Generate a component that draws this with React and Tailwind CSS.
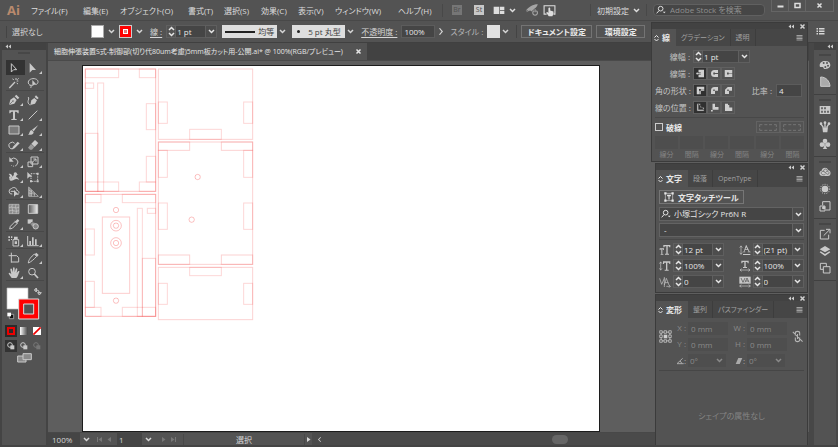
import React, { useState } from 'react';

const menus = [
    { label: 'ファイル(F)', width: 'w-[52px]' },
    { label: '編集(E)', width: 'w-[37px]' },
    { label: 'オブジェクト(O)', width: 'w-[68px]' },
    { label: '書式(T)', width: 'w-[36px]' },
    { label: '選択(S)', width: 'w-[37px]' },
    { label: '効果(C)', width: 'w-[37px]' },
    { label: '表示(V)', width: 'w-[37px]' },
    { label: 'ウィンドウ(W)', width: 'w-[63px]' },
    { label: 'ヘルプ(H)', width: 'w-[44px]' },
];

const Icon = ({ size = 'size-3', box = 36, className = '', children }) => (
    <svg className={`${size} ${className} shrink-0`} viewBox={`0 0 ${box} ${box}`} fill="currentColor" stroke="none" aria-hidden="true">
        {children}
    </svg>
);

const line = { fill: 'none', stroke: 'currentColor', strokeWidth: 3 };
const thin = { fill: 'none', stroke: 'currentColor', strokeWidth: 2 };

/* Herramientas, agrupadas como en la barra lateral */
const toolGroups = [
    [
        { name: '選択', more: false, art: <path d="M10 5v25l7-7h9z" {...line} /> },
        { name: 'ダイレクト選択', more: true, art: <path d="M8 3v29l8-8h11z" /> },
        { name: '自動選択', more: false, art: <g {...line}><path d="M4 33 21 15" strokeWidth="4" /><path d="M24 3v6M31 12h-5M14 5l3 4M30 21l-4-3M32 4l-4 4" /></g> },
        { name: 'なげなわ', more: false, art: <g><path d="M16 25C2 26 0 12 10 7s23-1 23 7c0 4-2 7-5 8M8 25c5 0 6 6 2 8" {...line} /><path d="M16 9v19l5-5h8z" /></g> },
    ],
    [
        { name: 'ペン', more: true, art: <g><path d="M3 33 7 17l11-7 8 8-7 11z" /><path d="m20 7 5-5 9 9-5 5z" /><path d="m4 32 10-10" stroke="#535353" strokeWidth="2" /><circle cx="15" cy="21" r="2" fill="#535353" /></g> },
        { name: '曲線', more: false, art: <g><path d="M10 33l3-14 9-7 8 7-6 10z" /><path d="m23 9 4-5 8 8-4 4z" /><path d="M3 9c5 3 0 9 0 14s3 9 7 10" {...line} /></g> },
        { name: '文字', more: true, art: <path d="M4 4h28v9h-3c-1-4-3-5-8-5v19c0 3 1 3 5 3v3H10v-3c4 0 5 0 5-3V8c-5 0-7 1-8 5H4z" /> },
        { name: '直線', more: true, art: <path d="M5 31 31 5" {...line} /> },
        { name: '長方形', more: true, art: <path d="M3 6h30v24H3z" {...line} fill="#7b7b7b" /> },
        { name: 'ブラシ', more: true, art: <g><path d="M34 3 20 22l-5-5z" /><path d="M13 18l7 6c-1 9-9 9-17 8 6-3 3-11 10-14z" /></g> },
        { name: 'Shaper', more: true, art: <g><path d="M16 29A10 10 0 1 1 20 13" {...line} /><path d="M12 31l3-8L29 8l6 5-15 15z" /></g> },
        { name: '消しゴム', more: true, art: <g><path d="M13 14 24 3l10 9-11 12z" /><path d="m12 15 10 9-7 8H9l-6-6z" fill="#9a9a9a" /></g> },
    ],
    [
        { name: '回転', more: true, art: <g><path d="M9 10a12 12 0 1 1 1 18" {...line} strokeDasharray="42 3 3 3 3 3" /><path d="M4 3v14h13z" /></g> },
        { name: '拡大・縮小', more: true, art: <g {...line}><path d="M12 3h21v21H12zM3 18h14v14H3z" /><path d="m17 18 9-9M19 9h8v8" /></g> },
        { name: '線幅', more: true, art: <g><path d="M2 9c6-3 9 1 12 8 4-8 9-11 18-7-6 0-7 4-8 8 3 1 7 3 10 9-7-4-12-3-17 0-6 4-12 3-14-3 4 2 8-1 9-5C7 19 6 13 2 9z" /><circle cx="22" cy="9" r="5" /><circle cx="7" cy="20" r="4" /></g> },
        { name: '自由変形', more: false, art: <g><path d="M12 8h20v23H12z" {...line} strokeDasharray="4 3" /><path d="M1 3v20l6-6h9zM29 5h6v6h-6zM29 28h6v6h-6zM9 28h6v6H9z" /></g> },
        { name: 'シェイプ形成', more: true, art: <g><path d="M13 24a8 8 0 0 1-3-16c7-7 17-2 16 5 6 1 8 5 6 10M8 16h12" {...line} /><path d="M18 12v20l6-6h9z" /></g> },
        { name: '遠近グリッド', more: true, art: <g><path d="M5 3v28h29L5 3zm0 9 17 10M5 21l20 4M14 12v19M22 20v11" {...thin} /><path d="M5 4v27h9V13z" fillOpacity="0.5" /></g> },
    ],
    [
        { name: 'メッシュ', more: false, art: <g><path d="M3 4h30v28H3z" fill="#8b8b8b" /><path d="M3 4h30v28H3zM3 14c10-6 18 5 30-1M3 24c10-6 18 5 30-1M13 4c-5 9 5 18 0 28M24 4c-5 9 5 18 0 28" {...thin} /></g> },
        { name: 'グラデーション', more: false, art: <g><defs><linearGradient id="tool-grad"><stop stopColor="#555" /><stop offset="1" stopColor="#eee" /></linearGradient></defs><path d="M4 5h28v26H4z" fill="url(#tool-grad)" stroke="currentColor" strokeWidth="3" /></g> },
        { name: 'スポイト', more: true, art: <g><path d="M5 33 7 25 21 11l6 6-14 14z" {...line} /><path d="m19 8 4 1 6-6 5 5-6 6 1 5z" /></g> },
        { name: 'ブレンド', more: false, art: <g><path d="M2 4h15v13H2z" /><circle cx="18" cy="19" r="7" fill="#999" stroke="#535353" strokeWidth="2" /><circle cx="26" cy="25" r="8" fill="#888" stroke="currentColor" strokeWidth="3" /></g> },
    ],
    [
        { name: 'シンボルスプレー', more: true, art: <g><path d="M15 14h17v19H15z" {...line} /><path d="M18 5h11v8H18zM20 19h7v8h-7zM1 4h5v5H1zM9 4h4v5H9zM1 13h5v4H1zM9 12h3v3H9z" /></g> },
        { name: 'グラフ', more: true, art: <g><path d="M2 3v29h33" {...line} /><path d="M7 18h5v12H7zM15 7h5v23h-5zM24 13h5v17h-5z" /></g> },
    ],
    [
        { name: 'アートボード', more: false, art: <path d="M10 2v30M2 11h24M10 30h22V17l-6-6" {...line} /> },
        { name: 'スライス', more: true, art: <g><path d="M4 33c0-10 9-19 18-27l7 7C21 22 13 29 4 33z" {...line} /><path d="m23 7 5-5 7 7-5 5z" /></g> },
        { name: '手のひら', more: true, art: <path d="M11 33 2 20c0-3 3-4 5-1l3 3L7 8c0-4 4-4 5-1l3 9V4c0-4 5-4 5 0v12l3-10c1-3 5-3 5 1l-2 11 4-5c3-2 5 0 4 2-3 6-4 14-9 18z" /> },
        { name: 'ズーム', more: false, art: <g><circle cx="15" cy="14" r="10" {...line} /><path d="m22 21 11 12" {...line} strokeWidth="5" /></g> },
    ],
];

/* Piezas del dibujo: [x, y, ancho, alto, opacidad] */
const plates = [
    [16, 27, 211, 367, 0.24], [16, 27, 100, 26, 0.16], [178, 27, 49, 26, 0.16], [16, 69, 25, 16, 0.16],
    [53, 69, 18, 325, 0.16], [199, 131, 28, 78, 0.16], [199, 289, 28, 77, 0.16], [16, 220, 38, 174, 0.16],
    [16, 366, 100, 28, 0.16], [178, 366, 49, 28, 0.16],
    [235, 27, 283, 211, 0.18], [235, 126, 27, 64, 0.16], [491, 126, 27, 64, 0.16], [329, 208, 95, 30, 0.16],
    [235, 246, 283, 367, 0.18], [235, 246, 94, 25, 0.18], [424, 246, 94, 25, 0.18], [235, 271, 27, 81, 0.16],
    [491, 271, 27, 81, 0.16], [235, 429, 27, 79, 0.16], [491, 429, 27, 79, 0.16], [235, 585, 94, 28, 0.18],
    [424, 585, 94, 28, 0.18],
    [235, 622, 283, 157, 0.18], [329, 622, 95, 25, 0.16], [235, 670, 27, 63, 0.16], [491, 670, 27, 63, 0.16],
    [16, 403, 211, 366, 0.22], [16, 403, 47, 25, 0.16], [127, 403, 100, 25, 0.16], [67, 471, 82, 229, 0.2],
    [172, 445, 15, 324, 0.16], [202, 445, 25, 15, 0.16], [16, 507, 27, 78, 0.16], [16, 664, 27, 78, 0.16],
    [187, 595, 40, 174, 0.18], [16, 742, 47, 27, 0.16], [127, 742, 100, 27, 0.16],
];

const holes = [
    [353, 351, 8], [335, 479, 8], [108, 450, 8], [108, 497, 16], [108, 497, 8],
    [108, 549, 16], [108, 549, 8], [108, 722, 8],
];

const dockGroups = [
    [
        { name: 'カラー', art: <g><path d="M18 6c11 0 16 5 16 12 0 8-8 12-18 12-3 0-1-5-5-6-4 0-9 1-9-4C2 11 9 6 18 6z" /><g fill="#535353"><circle cx="14" cy="12" r="3" /><circle cx="24" cy="12" r="3" /><circle cx="27" cy="20" r="3" /><circle cx="19" cy="24" r="3" /></g></g> },
        { name: 'カラーガイド', art: <path d="M5 3c16 0 27 12 28 28H5z" fill="#aaa" stroke="currentColor" strokeWidth="3" /> },
    ],
    [
        { name: 'スウォッチ', art: <g><path d="M2 6h32v24H2z" /><path d="M6 10h6v6H6zM15 10h6v6h-6zM6 20h6v6H6zM15 20h6v6h-6zM24 20h6v6h-6z" fill="#6b6b6b" /></g> },
        { name: 'ブラシ', art: <g><path d="M10 19h17l-2 15H12z" /><path d="M13 19 5 8M18 19V4M23 19l7-11" {...line} strokeWidth="4" /><circle cx="6" cy="8" r="4" /><circle cx="18" cy="5" r="4" /><circle cx="30" cy="8" r="4" /></g> },
        { name: 'シンボル', art: <g><circle cx="18" cy="9" r="7" /><circle cx="9" cy="20" r="7" /><circle cx="27" cy="20" r="7" /><path d="M16 15h4c0 9 1 15 5 18H11c4-3 5-9 5-18z" /></g> },
    ],
    [
        { name: 'CC ライブラリ', art: <g><path d="M11 30C-1 30-2 16 8 14c1-10 16-13 20-1 9 1 9 17-1 17z" /><path d="M19 25c-5 4-14 0-12-6 2-5 8-4 11 0l5 5c6 3 10-4 5-7-3-2-7 0-9 3M14 16c-1-9 11-9 11-1" fill="none" stroke="#535353" strokeWidth="2" /></g> },
        { name: 'アピアランス', art: <g><circle cx="18" cy="18" r="10" /><circle cx="18" cy="18" r="14" {...line} strokeDasharray="3 4" /></g> },
        { name: 'アセット', art: <g><path d="M11 16V5h22v25H20" {...line} /><path d="M3 18h15v15H3z" {...line} /><circle cx="14" cy="23" r="5" /></g> },
    ],
    [
        { name: '書き出し', art: <g><path d="M17 7H4v26h25V20" {...line} /><path d="M14 23 31 6M21 4h12v12" {...line} /></g> },
        { name: 'レイヤー', art: <g><path d="m18 3 16 10-16 9L2 13z" /><path d="m5 19 13 8 13-8 3 3-16 11L2 22z" /></g> },
        { name: 'アートボード', art: <g {...line}><path d="M4 4h18v18H4z" /><path d="M13 14h20v19H13z" fill="#535353" /></g> },
    ],
];

const Chevron = ({ className = '' }) => (
    <Icon size="size-[7px]" box={14} className={className}>
        <path d="m2 4 5 5 5-5" fill="none" stroke="currentColor" strokeWidth="3" />
    </Icon>
);

const Collapse = () => (
    <Icon size="size-[7px]" box={14}>
        <path d="M6 3 1 7l5 4zM12 3 7 7l5 4z" />
    </Icon>
);

const Cross = () => (
    <Icon size="size-[7px]" box={14}>
        <path d="m3 3 8 8M11 3l-8 8" fill="none" stroke="currentColor" strokeWidth="3" />
    </Icon>
);

const Glass = () => (
    <Icon size="size-[10px]" box={30}>
        <circle cx="14" cy="11" r="7" {...line} />
        <path d="m9 17-7 8" {...line} />
        <path d="M20 20h9l-4 5z" />
    </Icon>
);

const Stepper = ({ label }) => (
    <button type="button" aria-label={`${label}を増減`} className="flex w-[10px] shrink-0 items-center justify-center border border-[#606060]">
        <svg className="h-[11px] w-[7px]" viewBox="0 0 14 22" fill="none" stroke="currentColor" strokeWidth="3" aria-hidden="true">
            <path d="m2 8 5-5 5 5M2 14l5 5 5-5" />
        </svg>
    </button>
);

/* Campo numérico con flechas y lista */
const NumberField = ({ id, label, value, width = 'w-[29px]' }) => (
    <span className="flex h-[13px] text-[#e6e6e6]">
        <Stepper label={label} />
        <input id={id} aria-label={label} defaultValue={value} className={`${width} border-y border-[#5c5c5c] bg-[#454545] pl-px leading-3 outline-none`} />
        <button type="button" aria-label={`${label}の候補`} className="flex w-[12px] items-center justify-center border border-[#5f5f5f] bg-[#4d4d4d]">
            <Chevron />
        </button>
    </span>
);

const Drop = ({ label, value, className = '', pad = 'pl-1' }) => (
    <span className={`grid h-[13px] ${className}`}>
        <select aria-label={label} className={`[grid-area:1/1] w-full appearance-none border border-[#636363] bg-[#454545] leading-3 outline-none ${pad}`}>
            <option>{value}</option>
        </select>
        <span className="pointer-events-none flex w-[12px] items-center justify-center justify-self-end border border-[#636363] bg-[#4d4d4d] [grid-area:1/1]">
            <Chevron />
        </span>
    </span>
);

const Panel = ({ tabs, className = '', children }) => (
    <section className={`flex flex-col border border-[#3b3b3b] bg-[#535353] ${className}`}>
        <div className="flex h-[6px] items-center justify-end gap-1 bg-[#424242] pr-px">
            <button type="button" aria-label="たたむ"><Collapse /></button>
            <button type="button" aria-label="閉じる"><Cross /></button>
        </div>
        <div role="tablist" className="flex h-[17px] items-stretch bg-[#464646] text-[7px] text-[#a0a0a0]">
            {tabs.map((tab, i) => (
                <button
                    key={tab}
                    type="button"
                    role="tab"
                    aria-selected={i === 0}
                    className={i === 0
                        ? 'flex items-center gap-[3px] bg-[#535353] pr-1.5 pl-0.5 text-[8px] font-bold text-[#e8e8e8]'
                        : 'border-r border-[#3d3d3d] px-[5px]'}
                >
                    {i === 0 && (
                        <svg className="h-2 w-[5px]" viewBox="0 0 10 16" fill="none" stroke="currentColor" strokeWidth="2" aria-hidden="true">
                            <path d="m1 7 4-4 4 4M1 10l4 4 4-4" />
                        </svg>
                    )}
                    {tab}
                </button>
            ))}
            <button type="button" aria-label="パネルメニュー" className="mr-1 ml-auto">
                <Icon size="size-[7px]" box={14}><path d="M1 2h12v2H1zM1 5h12v2H1zM1 8h12v2H1zM1 11h12v2H1z" /></Icon>
            </button>
        </div>
        {children}
    </section>
);

const strokeRows = [
    {
        label: '線端',
        options: [
            { name: 'なし', art: <g><path d="M10 3h22v30H10V22h9v-8h-9z" /><path d="M3 18h18" {...line} /><circle cx="5" cy="18" r="4" /></g> },
            { name: '丸形', art: <path fillRule="evenodd" d="M32 4H18a14 14 0 0 0 0 28h14V20H20v2h-7v-8h7v2h12z" /> },
            { name: '突出', art: <path fillRule="evenodd" d="M3 4h30v28H3zm9 10v8h7v-3h14v-2H19v-3z" /> },
        ],
    },
    {
        label: '角の形状',
        options: [
            { name: 'マイター', art: <path fillRule="evenodd" d="M3 3h30v17H20v13H3zm9 9v7h3v14h2V19h2v-2h14v-2H19v-3z" /> },
            { name: 'ラウンド', art: <path fillRule="evenodd" d="M4 32V18C4 9 9 4 18 4h14v15H20v13zm9-18v6h6v-6z" /> },
            { name: 'ベベル', art: <path fillRule="evenodd" d="M4 32V15L15 4h17v15H20v13zm9-18v6h6v-6z" /> },
        ],
    },
    {
        label: '線の位置',
        options: [
            { name: '中央', art: <path d="M4 3h13v15h15v14H4zM10 4v22h22" stroke="#444" strokeWidth="2" /> },
            { name: '内側', art: <path d="M10 3h10v13h14v11H10zM4 28h7v6H4z" /> },
            { name: '外側', art: <path d="M4 3h12v5h5v10h12v14H4z" /> },
        ],
    },
];

const typeFields = [
    { label: 'フォントサイズ', value: '12 pt', art: <path d="M13 3h21v7h-3l-1-3h-4v22h4v3H18v-3h4V7h-5l-1 3h-3zM2 13h13v5h-2l-1-2h-2v14h3v2H5v-2h2V16H5l-1 2H2z" /> },
    { label: '行送り', value: '(21 pt)', art: <g><path d="m22 3 10 20h3v2h-9v-2h3l-2-5h-9l-2 5h3v2h-8v-2h3L21 3zm0 7-3 6h6zM12 30h22v3H12z" /><path d="M6 5v26M2 11l4-5 4 5M2 26l4 5 4-5" {...thin} /></g> },
    { label: '垂直比率', value: '100%', art: <g><path d="M12 4h22v8h-3l-1-4h-5v21h4v3H17v-3h4V8h-5l-1 4h-3z" /><path d="M5 5v26M1 11l4-5 4 5M1 25l4 5 4-5" {...thin} /></g> },
    { label: '水平比率', value: '100%', art: <g><path d="M7 2h22v8h-3l-1-4h-5v15h4v3H12v-3h4V6h-5l-1 4H7z" /><path d="M3 30h30M8 26l-5 4 5 4M28 26l5 4-5 4" {...thin} /></g> },
    { label: 'カーニング', value: '0', art: <g><path d="m2 7 6 18 8-18M16 27l6-20 8 20M18 20h10M16 3v30" {...thin} /><path d="M22 31h12M30 27l4 4-4 4" {...thin} /></g> },
    { label: 'トラッキング', value: '0', art: <g><path d="M1 2h34v21H1z" /><path d="m6 6 6 13 6-13M18 19l6-13 6 13M20 15h8" fill="none" stroke="#444" strokeWidth="2" /><path d="M2 30h32M7 26l-5 4 5 4M29 26l5 4-5 4" {...thin} /></g> },
];

const Arrow = ({ label, d, className = '' }) => (
    <button type="button" aria-label={label} className={className}>
        <Icon size="size-[7px]" box={14}><path d={d} /></Icon>
    </button>
);

const MenuBar = () => (
    <header className="flex h-[21px] shrink-0 items-center border-b border-[#484848] text-[#dedede]">
        <span className="w-[24px] pl-[7px] text-[13px] font-bold text-[#b98a6d]">Ai</span>
        <nav className="flex pl-[7px]">
            {menus.map((menu) => (
                <button key={menu.label} type="button" className={`${menu.width} text-left whitespace-nowrap`}>{menu.label}</button>
            ))}
        </nav>
        <div className="flex h-[13px] items-center border-l border-[#484848] pl-[9px]">
            <button type="button" className="mr-3 size-[10px] bg-[#767676] text-[7px] leading-[10px] text-[#505050]">Br</button>
            <button type="button" className="mr-[9px] size-[10px] bg-[#c8c8c8] text-[7px] leading-[10px] text-[#505050]">St</button>
            <button type="button" aria-label="ドキュメントレイアウト" className="flex items-center gap-1">
                <Icon><path d="M2 8h17v22H2zM21 8h13v10H21zM21 20h13v10H21z" /></Icon>
                <Chevron />
            </button>
            <button type="button" aria-label="GPU プレビュー" className="ml-[9px] text-[#a5a5a5]">
                <Icon size="size-[14px]">
                    <path d="M2 20C10 9 20 3 33 3c-2 6-5 9-9 12l-6 7-5-3-11 5 7-6z" />
                    <circle cx="26" cy="25" r="8" fill="#535353" />
                    <path d="M23 20a6 6 0 1 0 6 0M26 16v8" {...line} />
                </Icon>
            </button>
            <button type="button" aria-label="タッチワークスペース" className="ml-1">
                <Icon size="size-[13px]">
                    <path d="M10 28H3V5h30v23h-4" {...line} />
                    <path d="M15 12c0-3 5-3 5 0v6l9 3v6l-3 7H16l-7-10c2-3 4-1 6 1z" />
                </Icon>
            </button>
        </div>
        <div className="ml-auto flex h-full">
            <button type="button" className="my-1 flex items-center gap-1 border-x border-[#484848] px-1.5 whitespace-nowrap">
                初期設定
                <Chevron />
            </button>
            <label className="mx-1.5 my-1 flex w-[112px] items-center gap-1 rounded-sm border border-[#606060] bg-[#464646] pl-0.5">
                <Glass />
                <input type="search" aria-label="検索" placeholder="Adobe Stock を検索" className="min-w-0 flex-1 bg-transparent leading-3 outline-none placeholder:text-[#909090]" />
            </label>
            <div className="mr-1 flex h-[12px] items-center border border-t-0 border-[#656565]">
                <button type="button" aria-label="最小化" className="flex h-full w-[17px] items-center justify-center border-r border-[#656565]">
                    <Icon size="size-[7px]" box={14}><path d="M1 7h12v4H1z" /></Icon>
                </button>
                <button type="button" aria-label="最大化" className="flex h-full w-[17px] items-center justify-center border-r border-[#656565]">
                    <Icon size="size-[7px]" box={14}><path d="M2 3h10v8H2z" fill="none" stroke="currentColor" strokeWidth="3" /></Icon>
                </button>
                <button type="button" aria-label="ウィンドウを閉じる" className="flex h-full w-[27px] items-center justify-center"><Cross /></button>
            </div>
        </div>
    </header>
);

const ControlBar = () => (
    <div className="flex h-[22px] shrink-0 items-center border-b border-[#404040] pl-1.5 whitespace-nowrap text-[#d6d6d6]">
        <span className="h-3 w-1.5 border-l border-[#444]" />
        <span className="w-[79px]">選択なし</span>
        <button type="button" aria-label="塗り" className="flex items-center gap-1">
            <span className="size-[13px] border border-[#aaa] bg-white" />
            <Chevron />
        </button>
        <button type="button" aria-label="線の色" className="ml-1 flex items-center gap-1">
            <span className="flex size-[13px] items-center justify-center border border-[#ccc] bg-[#f00]">
                <span className="size-[5px] border border-white bg-[#e08080]" />
            </span>
            <Chevron />
        </button>
        <label htmlFor="stroke-width" className="mr-1 ml-[7px] underline underline-offset-2">線 :</label>
        <NumberField id="stroke-width" label="線の太さ" value="1 pt" />
        <button type="button" aria-label="可変線幅" className="ml-[5px] flex items-center">
            <span className="flex h-[13px] w-[55px] items-center justify-between bg-[#dedede] px-[3px] text-[#3c3c3c]">
                <span className="h-0.5 w-[30px] bg-[#222]" />
                均等
            </span>
            <Chevron className="ml-0.5" />
        </button>
        <button type="button" aria-label="ブラシ定義" className="ml-[6px] flex items-center">
            <span className="flex h-[13px] w-[53px] items-center gap-2 bg-[#dedede] pl-[5px] text-[#3c3c3c]">
                <span className="size-[3px] rounded-full bg-[#222]" />
                5 pt 丸型
            </span>
            <Chevron className="ml-0.5" />
        </button>
        <label htmlFor="opacity" className="mr-1 ml-[7px] underline underline-offset-2">不透明度 :</label>
        <input id="opacity" defaultValue="100%" className="h-[13px] w-[34px] border border-[#5c5c5c] bg-[#454545] px-0.5 text-[#e6e6e6] outline-none" />
        <Arrow label="不透明度スライダー" d="m4 1 5 6-5 6 2 1 6-7-6-7z" className="mr-1.5 ml-0.5" />
        <span className="mr-1 text-[#b5b5b5]">スタイル :</span>
        <button type="button" aria-label="グラフィックスタイル" className="flex items-center gap-0.5">
            <span className="size-[13px] bg-[#e2e2e2]" />
            <Chevron />
        </button>
        <div className="ml-[7px] flex gap-1 border-l border-[#444] pl-1 font-bold text-[#ececec]">
            <button type="button" className="h-[13px] w-[71px] border border-[#747474]">ドキュメント設定</button>
            <button type="button" className="h-[13px] w-[49px] border border-[#747474]">環境設定</button>
        </div>
        <button type="button" aria-label="コントロールメニュー" className="mr-[13px] ml-auto">
            <Icon size="size-[9px]" box={18}><path d="M1 2h3v3H1zM6 2h11v3H6zM1 7h3v3H1zM6 7h11v3H6zM1 12h3v3H1zM6 12h11v3H6z" /></Icon>
        </button>
    </div>
);

const Toolbox = () => {
    const [active, setActive] = useState('選択');

    return (
        <aside className="flex w-[48px] shrink-0 flex-col border-r-2 border-l-2 border-[#444] bg-[#535353] text-[#c9c9c9]">
            <div className="flex h-[7px] items-center bg-[#424242] pl-[3px]"><Collapse /></div>
            <div className="mx-auto mt-0.5 mb-[6px] h-0.5 w-3 bg-[#474747]" />
            {toolGroups.map((group) => (
                <div key={group[0].name} className="mr-0.5 mb-px ml-1 grid grid-cols-2 border-b border-[#484848] last:border-0">
                    {group.map((tool) => (
                        <button
                            key={tool.name}
                            type="button"
                            aria-label={tool.name}
                            aria-pressed={active === tool.name}
                            onClick={() => setActive(tool.name)}
                            className={`flex h-[15px] items-center justify-center ${active === tool.name ? 'bg-[#333]' : ''}`}
                        >
                            <Icon>{tool.art}</Icon>
                            <span className="flex h-[13px] w-[3px] items-end">
                                {tool.more && <Icon size="size-[3px]" box={6}><path d="M6 0v6H0z" /></Icon>}
                            </span>
                        </button>
                    ))}
                </div>
            ))}
            <div className="mx-auto mt-[5px]">
                <svg className="h-[34px] w-[36px]" viewBox="0 0 108 102" aria-label="塗りと線">
                    <path d="M3 3h63v63H3z" fill="#fff" stroke="#bbb" strokeWidth="2" />
                    <path d="M38 36h60v60H38z" fill="#f00" stroke="#ddd" strokeWidth="3" />
                    <path d="M53 51h30v30H53z" fill="#535353" stroke="#ddd" strokeWidth="3" />
                    <path d="M87 9h6q7 0 7 10M85 9l6-6v12zM95 17h11l-6 7z" fill="none" stroke="#ccc" strokeWidth="3" />
                    <path d="M10 82h13v13H10z" fill="#111" stroke="#ccc" strokeWidth="2" />
                    <path d="M4 77h11v11H4z" fill="#fff" />
                </svg>
            </div>
            <div className="mx-auto mt-1 flex gap-px">
                <button type="button" aria-label="カラー" className="flex size-[12px] items-center justify-center bg-[#2b2b2b]">
                    <span className="size-2 border-2 border-[#e00]" />
                </button>
                <button type="button" aria-label="グラデーション" className="flex size-[12px] items-center justify-center">
                    <span className="size-2 bg-linear-to-r from-white to-[#444]" />
                </button>
                <button type="button" aria-label="なし" className="flex size-[12px] items-center justify-center">
                    <Icon size="size-2" box={24}><path d="M0 0h24v24H0z" fill="#fff" /><path d="M1 23 23 1" stroke="#e00" strokeWidth="5" /></Icon>
                </button>
            </div>
            <div className="mx-auto mt-[3px] flex gap-px">
                {['標準描画', '背面描画', '内側描画'].map((mode, i) => (
                    <button key={mode} type="button" aria-label={mode} disabled={i === 2} className={`flex size-[12px] items-center justify-center disabled:opacity-30 ${i === 0 ? 'bg-[#333]' : ''}`}>
                        <Icon size="size-2" box={24}>
                            <circle cx="9" cy="9" r="7" {...line} />
                            <path d="M10 10h12v12H10z" />
                        </Icon>
                    </button>
                ))}
            </div>
            <button type="button" aria-label="スクリーンモード" className="mx-auto">
                <svg className="h-3 w-[15px]" viewBox="0 0 45 36" fill="#8a8a8a" stroke="currentColor" strokeWidth="3" aria-hidden="true">
                    <path d="M2 12h25v18H2z" />
                    <path d="M18 5h25v18H18z" />
                </svg>
            </button>
        </aside>
    );
};

const StatusBar = () => (
    <footer className="flex h-[13px] shrink-0 items-center border-t border-[#484848] bg-[#535353] text-[#d6d6d6]">
        <input aria-label="ズーム" defaultValue="100%" className="h-full w-[32px] bg-[#454545] pl-1 outline-none" />
        <button type="button" aria-label="ズームの候補" className="flex w-3 justify-center"><Chevron /></button>
        <div className="flex gap-[3px] pl-1 text-[#777]">
            <Arrow label="最初" d="M2 2h2v10H2zM12 2v10L5 7z" />
            <Arrow label="前へ" d="M10 2v10L3 7z" />
        </div>
        <input aria-label="アートボード" defaultValue="1" className="ml-1 h-full w-[25px] bg-[#454545] pl-0.5 outline-none" />
        <button type="button" aria-label="アートボードの候補" className="flex w-3 justify-center"><Chevron /></button>
        <div className="flex gap-[3px] px-1.5 text-[#777]">
            <Arrow label="次へ" d="M4 2v10l7-5z" />
            <Arrow label="最後" d="M2 2v10l7-5zM10 2h2v10h-2z" />
        </div>
        <span className="w-[122px] border-x border-[#484848] text-center">選択</span>
        <Arrow label="ステータス表示" d="M4 2v10l7-5z" />
        <div className="flex h-full flex-1 items-center bg-[#4a4a4a] pl-1">
            <Arrow label="左へスクロール" d="m9 2-5 5 5 5 1-1-4-4 4-4z" />
            <span className="ml-[229px] h-[9px] w-4 rounded-full bg-[#666]" />
        </div>
    </footer>
);

const Workspace = () => (
    <main className="flex min-w-0 flex-1 flex-col bg-[#5e5e5e]">
        <div className="flex h-[18px] shrink-0 border-b border-[#4a4a4a] bg-[#424242]">
            <button type="button" role="tab" aria-selected="true" className="flex w-[319px] items-center justify-between bg-[#535353] pr-[5px] pl-1.5 text-[7px] whitespace-nowrap text-[#e6e6e6]">
                細胞伸張装置S式-制御部(切り代80um考慮)5mm板カット用-公開.ai* @ 100%(RGB/プレビュー)
                <Cross />
            </button>
        </div>
        <div className="min-h-0 flex-1 overflow-hidden pt-1 pl-[34px]">
            <div className="h-[367px] w-[518px] border border-[#1c1c1c] bg-white">
                <svg className="size-full" viewBox="9 18 1548 1095" fill="none" stroke="#f00000" strokeWidth="3" aria-label="制御部の図面">
                    {plates.map(([x, y, w, h, o], i) => (
                        <rect key={i} x={x} y={y} width={w} height={h} strokeOpacity={o} />
                    ))}
                    {holes.map(([cx, cy, r], i) => (
                        <circle key={i} cx={cx} cy={cy} r={r} strokeOpacity="0.24" />
                    ))}
                </svg>
            </div>
        </div>
        <StatusBar />
    </main>
);

const Dock = () => (
    <aside className="ml-[5px] w-[22px] shrink-0 bg-[#535353] text-[#cacaca]">
        <div className="flex h-[7px] items-center justify-end bg-[#424242] pr-0.5"><Collapse /></div>
        {dockGroups.map((group) => (
            <div key={group[0].name} className="flex flex-col items-center border-b border-[#404040] pt-1 pb-1">
                <div className="h-0.5 w-3 bg-[#464646]" />
                {group.map((item) => (
                    <button key={item.name} type="button" aria-label={item.name} className="flex h-[17px] items-center">
                        <Icon size="size-3">{item.art}</Icon>
                    </button>
                ))}
            </div>
        ))}
    </aside>
);

const StrokePanel = () => (
    <Panel tabs={['線', 'グラデーション', '透明']} className="h-[140px] w-full">
        <div className="flex flex-col gap-1 px-[3px] pt-1 text-[#c4c4c4]">
            <div className="flex items-center gap-[3px]">
                <label htmlFor="panel-stroke" className="w-[35px] text-right">線幅 :</label>
                <NumberField id="panel-stroke" label="線幅" value="1 pt" width="w-[35px]" />
            </div>
            {strokeRows.map((row) => (
                <div key={row.label} className="flex h-[13px] items-center gap-[3px]">
                    <span className="w-[35px] text-right whitespace-nowrap">{row.label} :</span>
                    <div className="flex" role="group" aria-label={row.label}>
                        {row.options.map((option, i) => (
                            <button key={option.name} type="button" aria-label={option.name} className={`flex h-[13px] w-[14px] items-center justify-center border border-[#606060] text-[#cfcfcf] ${i === 0 ? 'bg-[#303030]' : ''}`}>
                                <Icon size="size-[9px]">{option.art}</Icon>
                            </button>
                        ))}
                    </div>
                    {row.label === '角の形状' && (
                        <label className="mr-0.5 ml-auto flex items-center gap-1">
                            比率 :
                            <input defaultValue="4" className="h-[13px] w-[26px] border border-[#5c5c5c] bg-[#454545] pl-0.5 text-[#e6e6e6] outline-none" />
                        </label>
                    )}
                </div>
            ))}
        </div>
        <div className="mx-[3px] mt-[3px] flex items-center border-t border-[#484848] pt-[3px]">
            <label className="flex items-center gap-[3px] font-bold text-[#ececec]">
                <input type="checkbox" className="size-2 appearance-none border border-[#ccc]" />
                破線
            </label>
            <div className="ml-auto flex text-[#858585]">
                {['正確', '整列'].map((name) => (
                    <button key={name} type="button" aria-label={name} disabled className="flex h-[12px] w-[24px] items-center justify-center border border-[#626262]">
                        <svg className="h-[7px] w-[18px]" viewBox="0 0 54 21" {...thin} aria-hidden="true">
                            <path d="M2 9V2h8M16 2h9M30 2h9M45 2h7v7M2 13v6h8M16 19h9M30 19h9M45 19h7v-6" />
                        </svg>
                    </button>
                ))}
            </div>
        </div>
        <div className="mx-[3px] mt-[3px] grid grid-cols-6 gap-0.5 text-center text-[7px] text-[#858585]">
            {['線分', '間隔', '線分', '間隔', '線分', '間隔'].map((name, i) => (
                <label key={i}>
                    <input disabled className="block h-[13px] w-full bg-[#4e4e4e]" />
                    {name}
                </label>
            ))}
        </div>
    </Panel>
);

const TypePanel = () => (
    <Panel tabs={['文字', '段落', 'OpenType']} className="h-[130px] w-[153px]">
        <div className="flex flex-col gap-[3px] px-[3px] pt-[3px] text-[#e6e6e6]">
            <button type="button" className="flex h-[14px] w-[85px] items-center gap-1 border border-[#767676] pl-1 font-bold whitespace-nowrap">
                <Icon size="size-[10px]">
                    <path d="M7 5h22M7 31h22M5 7v22M31 7v22" {...thin} />
                    <path d="M1 1h8v8H1zM27 1h8v8h-8zM1 27h8v8H1zM27 27h8v8h-8zM11 10h14v5h-5v12h-4V15h-5z" />
                </Icon>
                文字タッチツール
            </button>
            <div className="grid">
                <Drop label="フォント" value="小塚ゴシック Pr6N R" pad="pl-[14px]" className="[grid-area:1/1]" />
                <span className="pointer-events-none self-center pl-0.5 [grid-area:1/1]"><Glass /></span>
            </div>
            <Drop label="スタイル" value="-" />
            <div className="grid grid-cols-2 gap-x-[14px] gap-y-[3px] border-t border-[#484848] pt-[3px]">
                {typeFields.map((field) => (
                    <div key={field.label} className="flex items-center gap-0.5">
                        <Icon className="text-[#c8c8c8]">{field.art}</Icon>
                        <NumberField label={field.label} value={field.value} />
                    </div>
                ))}
            </div>
        </div>
    </Panel>
);

const TransformPanel = () => (
    <Panel tabs={['変形', '整列', 'パスファインダー']} className="min-h-0 w-[153px] flex-1">
        <div className="mx-[3px] flex items-center border-b border-[#464646] pt-1 pb-[3px] text-[#8a8a8a]">
            <Icon size="size-[13px]" className="mb-4 text-[#cfcfcf]">
                <path d="M6 6h24v24H6z" {...thin} />
                <g {...thin} fill="#535353"><path d="M2 2h7v7H2zM14 2h7v7h-7zM27 2h7v7h-7zM2 14h7v7H2zM27 14h7v7h-7zM2 27h7v7H2zM14 27h7v7h-7zM27 27h7v7h-7z" /></g>
                <path d="M13 13h10v10H13z" />
            </Icon>
            <div className="grid flex-1 grid-cols-[16px_40px_19px_40px] gap-y-[3px]">
                {['X', 'W', 'Y', 'H'].map((axis) => (
                    <label key={axis} className="contents">
                        <span className="pr-0.5 text-right whitespace-nowrap">{axis} :</span>
                        <input disabled defaultValue="0 mm" className="h-[13px] w-full bg-[#4e4e4e] pl-[3px]" />
                    </label>
                ))}
                {['回転', 'シアー'].map((name) => (
                    <label key={name} className="contents" aria-label={name}>
                        <span className="flex items-center justify-end pr-0.5 text-[#aaa]">
                            <Icon size="size-2" box={24}>
                                {name === '回転'
                                    ? <path d="M20 4 3 20h20M12 12q5 2 4 8" {...line} />
                                    : <path d="M10 3h12l-8 18H2z" />}
                            </Icon>
                            :
                        </span>
                        <span className="grid h-[13px] w-[38px]">
                            <select disabled className="appearance-none bg-[#4e4e4e] pl-0.5 leading-3 [grid-area:1/1]"><option>0°</option></select>
                            <Chevron className="pointer-events-none mr-[3px] self-center justify-self-end [grid-area:1/1]" />
                        </span>
                    </label>
                ))}
            </div>
            <button type="button" aria-label="縦横比を固定" className="mb-4 text-[#b5b5b5]">
                <Icon size="size-[13px]">
                    <path d="M12 15V9c0-7 12-7 12 0v6M12 21v6c0 7 12 7 12 0v-6M18 11v14M5 5l27 27" {...line} />
                </Icon>
            </button>
        </div>
        <p className="flex flex-1 items-center justify-center pt-[14px] text-[#858585]">シェイプの属性なし</p>
    </Panel>
);

const App = () => {
    return (
        <div className="relative flex h-screen flex-col overflow-hidden border-b-2 border-[#444] bg-[#535353] font-['Open_Sans','Noto_Sans_CJK_JP',sans-serif] text-[8px] leading-[11px] [font-feature-settings:'palt']">
            <MenuBar />
            <ControlBar />
            <div className="flex min-h-0 flex-1 border-r-2 border-[#484848] bg-[#474747]">
                <Toolbox />
                <Workspace />
                <Dock />
            </div>
            {/* Paneles flotantes sobre el lienzo */}
            <div className="absolute top-[22px] right-[30px] bottom-[-2px] flex w-[157px] flex-col items-end gap-px text-[#d0d0d0]">
                <StrokePanel />
                <TypePanel />
                <TransformPanel />
            </div>
        </div>
    );
};

export default App;
